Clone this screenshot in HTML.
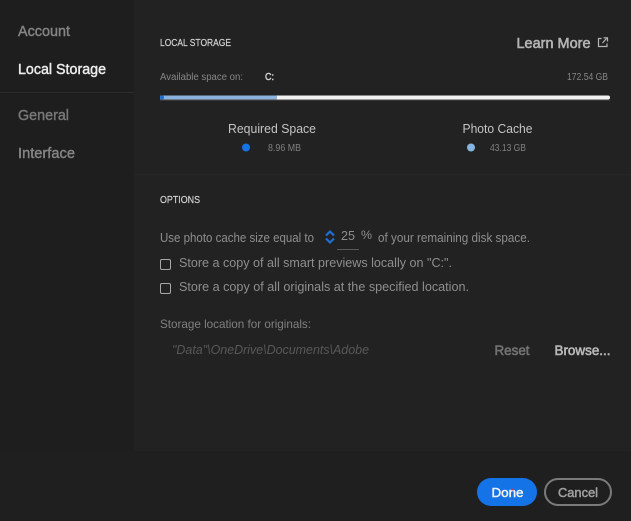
<!DOCTYPE html>
<html><head><meta charset="utf-8"><style>
html,body{margin:0;padding:0;background:#222;width:631px;height:521px;overflow:hidden}
svg{display:block}
text{font-family:"Liberation Sans",sans-serif}
</style></head><body>
<svg width="631" height="521" viewBox="0 0 631 521" xmlns="http://www.w3.org/2000/svg">
<rect width="631" height="521" fill="#222222"/>
<rect width="134" height="521" fill="#1e1e1e"/>
<rect y="451" width="631" height="70" fill="#1f1f1f"/>
<rect x="0" y="92" width="134" height="1" fill="#2c2c2c"/>
<rect x="134" y="174" width="497" height="1" fill="#262626"/>

<text x="18" y="36" font-size="14.500" fill="#858585" stroke="#858585" stroke-width="0.400" textLength="52" lengthAdjust="spacingAndGlyphs">Account</text>
<text x="18" y="74" font-size="14.500" fill="#ececec" stroke="#ececec" stroke-width="0.450" textLength="88" lengthAdjust="spacingAndGlyphs">Local Storage</text>
<text x="18" y="120" font-size="14.500" fill="#787878" stroke="#787878" stroke-width="0.400" textLength="51" lengthAdjust="spacingAndGlyphs">General</text>
<text x="18" y="158" font-size="14.500" fill="#858585" stroke="#858585" stroke-width="0.400" textLength="57" lengthAdjust="spacingAndGlyphs">Interface</text>

<text x="160" y="46" font-size="10" fill="#d2d2d2" stroke="#d2d2d2" stroke-width="0.200" textLength="71" lengthAdjust="spacingAndGlyphs">LOCAL STORAGE</text>
<text x="516.500" y="48" font-size="14.500" fill="#b4b4b4" stroke="#b4b4b4" stroke-width="0.600" textLength="74" lengthAdjust="spacingAndGlyphs">Learn More</text>
<path d="M601.500 38.500H598.500V46.500H607V43.500M602.500 43L606.500 38.500M603.500 37.800H607.500V41.500" fill="none" stroke="#b4b4b4" stroke-width="1.200"/>

<text x="160" y="80" font-size="10" fill="#868686" textLength="83" lengthAdjust="spacingAndGlyphs">Available space on:</text>
<text x="265" y="80" font-size="10" fill="#d8d8d8" stroke="#d8d8d8" stroke-width="0.400" textLength="9" lengthAdjust="spacingAndGlyphs">C:</text>
<text x="567" y="80" font-size="10" fill="#868686" textLength="41" lengthAdjust="spacingAndGlyphs">172.54 GB</text>

<rect x="160" y="95.500" width="450" height="4" rx="2" fill="#f2f2f2"/>
<rect x="160" y="95.500" width="117" height="4" rx="1" fill="#8ab2da"/>
<rect x="160" y="95.500" width="4" height="4" rx="2" fill="#1f6fd0"/>
<rect x="160" y="99.500" width="450" height="1" fill="#4a4a4a"/>

<text x="228" y="133" font-size="13" fill="#c4c4c4" textLength="88" lengthAdjust="spacingAndGlyphs">Required Space</text>
<circle cx="246" cy="147.500" r="4" fill="#1473e6"/>
<text x="268" y="151" font-size="10" fill="#808080" textLength="33" lengthAdjust="spacingAndGlyphs">8.96 MB</text>

<text x="462.500" y="133" font-size="13" fill="#c4c4c4" textLength="70" lengthAdjust="spacingAndGlyphs">Photo Cache</text>
<circle cx="471" cy="147.500" r="4" fill="#86b4de"/>
<text x="490" y="151" font-size="10" fill="#808080" textLength="36" lengthAdjust="spacingAndGlyphs">43.13 GB</text>

<text x="160" y="203" font-size="10" fill="#d2d2d2" stroke="#d2d2d2" stroke-width="0.200" textLength="40" lengthAdjust="spacingAndGlyphs">OPTIONS</text>

<text x="160" y="242" font-size="12.500" fill="#8e8e8e" textLength="154" lengthAdjust="spacingAndGlyphs">Use photo cache size equal to</text>
<path d="M326 235.500L330 231.500L334 235.500M326 238.500L330 242.500L334 238.500" fill="none" stroke="#1f6fd0" stroke-width="2.200"/>
<text x="341" y="240" font-size="12.500" fill="#8e8e8e" textLength="14" lengthAdjust="spacingAndGlyphs">25</text>
<rect x="337" y="249" width="22" height="1" fill="#5a5a5a"/>
<text x="361" y="239" font-size="12" fill="#8e8e8e" textLength="11" lengthAdjust="spacingAndGlyphs">%</text>
<text x="378" y="242" font-size="12.500" fill="#8e8e8e" textLength="152" lengthAdjust="spacingAndGlyphs">of your remaining disk space.</text>

<rect x="160.500" y="259.500" width="10" height="10" rx="1.500" fill="none" stroke="#a8a8a8" stroke-width="1"/>
<text x="179" y="267" font-size="12.500" fill="#8e8e8e" textLength="273" lengthAdjust="spacingAndGlyphs">Store a copy of all smart previews locally on "C:".</text>
<rect x="160.500" y="283.500" width="10" height="10" rx="1.500" fill="none" stroke="#a8a8a8" stroke-width="1"/>
<text x="179" y="291" font-size="12.500" fill="#8e8e8e" textLength="290" lengthAdjust="spacingAndGlyphs">Store a copy of all originals at the specified location.</text>

<text x="160" y="328" font-size="12" fill="#808080" textLength="151" lengthAdjust="spacingAndGlyphs">Storage location for originals:</text>
<text x="172" y="354" font-size="12.500" font-style="italic" fill="#585858" textLength="197" lengthAdjust="spacingAndGlyphs">"Data"\OneDrive\Documents\Adobe</text>
<text x="494.500" y="355" font-size="13.500" fill="#727272" stroke="#727272" stroke-width="0.600" textLength="35" lengthAdjust="spacingAndGlyphs">Reset</text>
<text x="554.500" y="355" font-size="13.500" fill="#b8b8b8" stroke="#b8b8b8" stroke-width="0.600" textLength="56" lengthAdjust="spacingAndGlyphs">Browse...</text>

<rect x="477" y="478" width="60" height="28" rx="14" fill="#1473e6"/>
<text x="491.500" y="497" font-size="13" fill="#f0f0f0" stroke="#f0f0f0" stroke-width="0.500" textLength="32" lengthAdjust="spacingAndGlyphs">Done</text>
<circle cx="513" cy="489.500" r="1" fill="#d8304a"/>
<rect x="545" y="479" width="66" height="26" rx="13" fill="none" stroke="#7a7a7a" stroke-width="2"/>
<text x="558" y="497" font-size="13" fill="#a0a0a0" stroke="#a0a0a0" stroke-width="0.500" textLength="40" lengthAdjust="spacingAndGlyphs">Cancel</text>
</svg>
</body></html>
